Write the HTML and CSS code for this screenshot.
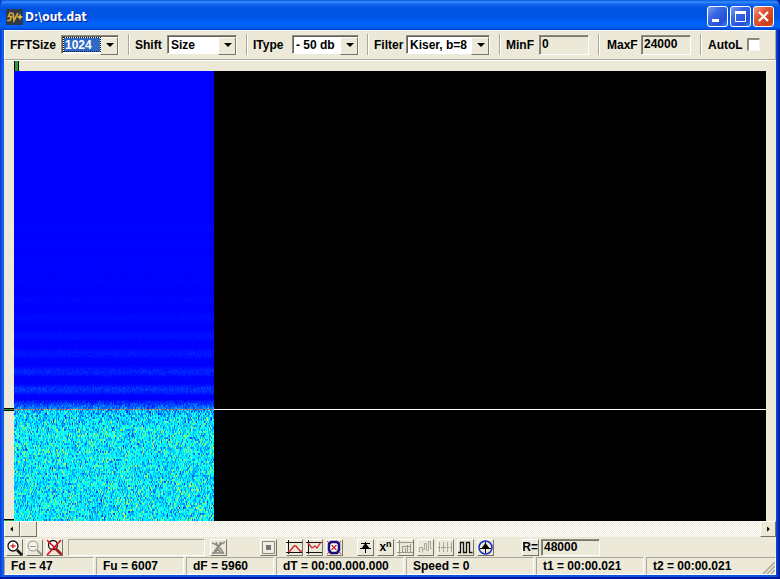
FILE: index.html
```html
<!DOCTYPE html>
<html lang="en">
<head>
<meta charset="utf-8">
<title>D:\out.dat</title>
<link rel="stylesheet" href="styles.css">
</head>
<body>
<div class="window">
  <header class="titlebar">
    <svg class="logo" viewBox="0 0 17 16" aria-hidden="true">
      <rect width="17" height="16" fill="#30384a"/>
      <path d="M6.500 4H4L2.500 7.500h3L4 11.500H1M7 4l1 7.500L12 4" fill="none" stroke="#d6a83e" stroke-width="1.700"/>
      <path d="M14 5.500v5M11.500 8h5" fill="none" stroke="#ead04a" stroke-width="1.400"/>
    </svg>
    <h1>D:\out.dat</h1>
    <div class="caption">
      <button class="cap" aria-label="Minimize"><svg viewBox="0 0 19 19"><path d="M4 12h7v3H4z" fill="#fff"/></svg></button>
      <button class="cap" aria-label="Maximize"><svg viewBox="0 0 19 19"><path d="M4.500 4v10.500h10V4" fill="none" stroke="#fff"/><path d="M4 4h11v3H4z" fill="#fff"/></svg></button>
      <button class="cap close" aria-label="Close"><svg viewBox="0 0 19 19"><path d="M5 5l9 9M14 5l-9 9" stroke="#fff" stroke-width="2.200"/></svg></button>
    </div>
  </header>
  <main class="client">
    <div class="toolbar">
      <div class="group g-size"><label for="size">FFTSize</label><span class="combo active"><select id="size"><option>1024</option></select><span class="focus"></span></span></div>
      <div class="group g-shift"><label for="shift">Shift</label><span class="combo"><select id="shift"><option>Size</option></select></span></div>
      <div class="group g-type"><label for="type">IType</label><span class="combo"><select id="type"><option>- 50 db</option></select></span></div>
      <div class="group g-filter"><label for="filter">Filter</label><span class="combo"><select id="filter"><option>Kiser, b=8</option></select></span></div>
      <div class="group g-min"><label for="minf">MinF</label><input class="text" id="minf" value="0"></div>
      <div class="group g-max"><label for="maxf">MaxF</label><input class="text" id="maxf" value="24000"></div>
      <div class="group g-auto"><label for="auto">AutoL</label><input class="check" type="checkbox" id="auto"></div>
    </div>
    <div class="ruler"></div>
    <div class="graph">
      <div class="scale"></div>
      <div class="plot"><canvas id="spectrum" width="200" height="450"></canvas></div>
      <div class="cursor"></div>
      <div class="tick cursor-tick"></div>
      <div class="tick end-tick"></div>
    </div>
    <div class="scrollbar">
      <button class="scroll" aria-label="Scroll left"><svg viewBox="0 0 16 16"><path d="M9 5v6L6 8z"/></svg></button>
      <div class="thumb"></div>
      <button class="scroll right" aria-label="Scroll right"><svg viewBox="0 0 16 16"><path d="M7 5v6l3-3z"/></svg></button>
    </div>
    <div class="tools">
      <div class="set">
        <button class="tool" aria-label="Zoom in"><svg viewBox="0 0 17 17"><circle cx="7" cy="7" r="5" fill="#fff" stroke="#111" stroke-width="1.300"/><path d="M11 11l5 5" stroke="#111" stroke-width="2.500"/><path d="M4.500 7h5M7 4.500v5" stroke="#e02030" stroke-width="1.300"/></svg></button>
        <button class="tool" aria-label="Zoom out"><svg viewBox="0 0 17 17"><circle cx="7" cy="7" r="5" fill="#f4f2e8" stroke="#96958b"/><path d="M11 11l5 5" stroke="#96958b" stroke-width="2.200"/><path d="M4 7.500h6" stroke="#96958b"/></svg></button>
        <button class="tool" aria-label="Reset zoom"><svg viewBox="0 0 17 17"><circle cx="7" cy="6" r="4.500" fill="#fff" stroke="#111" stroke-width="1.300"/><path d="M10 10l5 5" stroke="#111" stroke-width="2.500"/><path d="M1 1l15 15M15 1L1 16" stroke="#e01020" stroke-width="1.700"/></svg></button>
      </div>
      <div class="progress"></div>
      <button class="tool cancel" aria-label="Cancel"><svg viewBox="0 0 17 17"><path d="M2 4c4 1 9 5 12 11M15 3C10 5 6 9 3 15M6 3l2 5 3-5M5 14l3-4 3 4M2 14h12" fill="none" stroke="#8b8a80" stroke-width="1.500"/></svg></button>
      <button class="tool stop" aria-label="Stop"><svg viewBox="0 0 17 17"><path d="M2.500 2.500h12v12h-12z" fill="#f0eee2" stroke="#8b8a80"/><path d="M6 6h5v5H6z" fill="#77766e"/></svg></button>
      <div class="set views">
        <button class="tool" aria-label="Maximum curve"><svg viewBox="0 0 17 17"><path d="M2.500 1v14M0 3.500h16M0 13.500h16" stroke="#111" fill="none"/><path d="M2 12h2l4-5h2l4 5h2" fill="none" stroke="#d02834" stroke-width="1.300"/></svg></button>
        <button class="tool" aria-label="Minimum curve"><svg viewBox="0 0 17 17"><path d="M2.500 1v14M0 3.500h16M0 13.500h16" stroke="#111" fill="none"/><path d="M2 4l4 5 3-2 2 2 4-6" fill="none" stroke="#d02834" stroke-width="1.300"/></svg></button>
        <button class="tool" aria-label="Target"><svg viewBox="0 0 17 17"><path d="M1 2l14 13M15 2L1 15" stroke="#d02834"/><path d="M5 3h6l2 2v6l-2 3H5l-2-3V5z" fill="#fff" stroke="#17107c" stroke-width="2.500"/><path d="M5.500 6l5 5M10.500 6l-5 5" stroke="#d02834" stroke-width="1.300"/></svg></button>
      </div>
      <div class="set modes">
        <button class="tool" aria-label="Marker"><svg viewBox="0 0 17 17"><path d="M8 3h1v11H8zM4 4h9v1H4zM3 9h11v1H3z"/><path d="M8.500 4l4.500 6H4z"/></svg></button>
        <button class="tool power" aria-label="Power">x<sup>n</sup></button>
        <button class="tool" aria-label="Histogram"><svg viewBox="0 0 17 17"><path d="M2.500 1v14M0 3.500h16M0 13.500h16M5 7.500h9M5.500 7v6M8.500 9v4M10.500 6v7M13.500 5v8" fill="none" stroke="#99988c"/></svg></button>
        <button class="tool" aria-label="Envelope"><svg viewBox="0 0 17 17"><path d="M1 12.500h1.500V8.500h3v5M6 10.500h1.500v-6h2v7h2v-9h2v7h1.500" fill="none" stroke="#aaa99d"/></svg></button>
        <button class="tool" aria-label="Grid"><svg viewBox="0 0 17 17"><path d="M2.500 3v10M6.500 3v10M10.500 3v10M14.500 3v10" stroke="#aaa99d" fill="none"/><path d="M1 8.500h15" stroke="#99988c" stroke-dasharray="2 1"/></svg></button>
        <button class="tool" aria-label="Pulse"><svg viewBox="0 0 17 17"><path d="M1 13.500h2.500v-10h3v10h3v-10h3v10h3" stroke="#111" stroke-width="1.300" fill="none"/></svg></button>
        <button class="tool" aria-label="Circle marker"><svg viewBox="0 0 17 17"><circle cx="8.500" cy="8.500" r="6.500" fill="none" stroke="#1a2bc8" stroke-width="1.500"/><path d="M8 3h1v11H8zM3 9h11v1H3z"/><path d="M8.500 4l4.500 6H4z"/></svg></button>
      </div>
      <button class="tool rate-button">R=</button>
      <input class="text rate" aria-label="Rate" value="48000">
    </div>
    <footer class="status">
      <div class="cell">Fd = 47</div>
      <div class="cell">Fu = 6007</div>
      <div class="cell">dF = 5960</div>
      <div class="cell wide">dT = 00:00.000.000</div>
      <div class="cell wide">Speed = 0</div>
      <div class="cell mid">t1 = 00:00.021</div>
      <div class="cell last">t2 = 00:00.021<svg class="grip" viewBox="0 0 13 13" aria-hidden="true"><path d="M1 13L13 1M5 13l8-8M9 13l4-4" stroke="#aaa899" stroke-width="1.500"/></svg></div>
    </footer>
  </main>
</div>
<script src="spectrum.js"></script>
</body>
</html>
```

FILE: styles.css
```css
* { box-sizing: border-box; }

body {
  margin: 0;
  background: #0a3fd0;
  font: bold 12px/14px "Liberation Sans", Arial, sans-serif;
  color: #000;
}

button, input, select {
  margin: 0;
  padding: 0;
  border: 0;
  border-radius: 0;
  font: inherit;
  color: inherit;
}

svg { display: block; }

.window {
  display: flex;
  flex-direction: column;
  min-height: 100vh;
  padding: 0 4px 4px;
  background: linear-gradient(90deg, #0831d9 0, #166aee 3px, #0855dd 4px, #0855dd calc(100% - 4px), #0040d0 calc(100% - 3px), #00138c 100%);
  box-shadow: inset 0 -2px #0019a0;
}

.titlebar {
  display: flex;
  align-items: center;
  height: 30px;
  margin: 0 -4px;
  padding: 3px 6px 0;
  border-radius: 7px 7px 0 0;
  background: linear-gradient(#0058e6 0, #3a8df8 2px, #1468ee 4px, #0054e3 8px, #0055e5 17px, #0263fc 24px, #0261fa 27px, #0040c8 30px);
  color: #fff;
}

.logo { width: 17px; height: 16px; }

h1 {
  flex: 1;
  margin: 0 0 0 2px;
  font: bold 12px/16px "DejaVu Sans Condensed", "DejaVu Sans", sans-serif;
  text-shadow: 1px 1px #0a1883;
}

.caption { display: flex; gap: 2px; }

.cap {
  width: 21px;
  height: 21px;
  border: 1px solid #fff;
  border-radius: 3px;
  background: linear-gradient(135deg, #7ba0f2, #3a68e4 35%, #2450d8 75%, #3c7cf4);
}

.cap.close { background: linear-gradient(135deg, #f0a088, #e35a38 35%, #cc3c18 80%, #d85c30); }

.client {
  flex: 1;
  display: flex;
  flex-direction: column;
  background: #ece9d8;
}

.toolbar {
  display: flex;
  height: 30px;
  border: 1px solid #fff;
  border-right-color: #aca899;
  border-bottom-color: #aca899;
}

.group {
  display: flex;
  align-items: center;
  justify-content: space-between;
  margin: 3px 0 4px;
  padding: 0 9px 0 6px;
  border-right: 1px solid #aca899;
  box-shadow: 1px 0 #fff;
}

.g-size { width: 124px; padding-left: 5px; }
.g-shift { width: 118px; }
.g-type { width: 121px; padding-right: 8px; }
.g-filter { width: 132px; }
.g-min { width: 99px; }
.g-max { width: 102px; padding-left: 8px; }
.g-auto { flex: 1; padding-left: 7px; padding-right: 15px; border: 0; box-shadow: none; }

.combo { position: relative; height: 19px; }
.g-size .combo { width: 58px; }
.g-shift .combo { width: 70px; }
.g-type .combo { width: 67px; }
.g-filter .combo { width: 84px; }

select {
  display: block;
  width: 100%;
  height: 19px;
  padding-left: 3px;
  appearance: none;
  border: 1px solid #8c8a7c;
  border-right-color: #fff;
  border-bottom-color: #fff;
  background: #fff;
  box-shadow: inset 1px 1px #605f57;
}

.combo::before {
  content: "";
  position: absolute;
  top: 2px;
  right: 1px;
  width: 16px;
  height: 16px;
  border: 1px solid #fff;
  border-right-color: #77756a;
  border-bottom-color: #77756a;
  background: #ece9d8;
  pointer-events: none;
}

.combo::after {
  content: "";
  position: absolute;
  top: 8px;
  right: 5px;
  border: 4px solid transparent;
  border-top-color: #000;
  border-bottom: 0;
  pointer-events: none;
}

.active select {
  background: linear-gradient(#316ac5, #316ac5) 2px 2px / calc(100% - 20px) 14px no-repeat #fff;
  color: #fff;
}

.focus {
  position: absolute;
  top: 2px;
  right: 18px;
  bottom: 2px;
  left: 2px;
  border: 1px dotted #101830;
  pointer-events: none;
}

.text {
  width: 50px;
  height: 20px;
  padding: 0 0 1px 2px;
  border: 1px solid #8c8a7c;
  border-right-color: #fff;
  border-bottom-color: #fff;
  background: #ece9d8;
  box-shadow: inset 1px 1px #77756a;
}

.check {
  width: 13px;
  height: 13px;
  appearance: none;
  background: #fff;
  border: 2px solid #8c8a7c;
  border-right: 1px solid #f5f3ea;
  border-bottom: 1px solid #f5f3ea;
}

.ruler {
  height: 11px;
  padding-left: 10px;
  border-top: 1px solid #fff;
}

.ruler::before {
  content: "";
  display: block;
  width: 3px;
  height: 10px;
  border: 1px solid #000;
  border-width: 0 1px;
  background: #2c9c38;
}

.graph {
  position: relative;
  flex: 1;
  display: flex;
  padding-right: 10px;
}

.scale { width: 10px; }
.plot { flex: 1; background: #000; }
.plot canvas { display: block; }

.cursor {
  position: absolute;
  top: 338px;
  left: 210px;
  right: 10px;
  height: 1px;
  background: #fff;
}

.tick {
  position: absolute;
  left: 0;
  width: 10px;
  height: 3px;
  border: 1px solid #000;
  border-width: 1px 0;
  background: #2c9c38;
}

.cursor-tick { top: 337px; }
.end-tick { bottom: 0; height: 2px; border-bottom: 0; }

.scrollbar {
  display: flex;
  height: 16px;
  background: repeating-conic-gradient(#fff 0 25%, #ece9d8 0 50%) 0 0 / 2px 2px;
}

.scroll, .thumb, .tool {
  border: 1px solid #fff;
  border-right-color: #77756a;
  border-bottom-color: #77756a;
  background: #ece9d8;
}

.scroll { width: 16px; height: 16px; }
.thumb { width: 17px; }
.right { margin-left: auto; }

.tools {
  display: flex;
  align-items: center;
  height: 20px;
  padding-left: 2px;
}

.set { display: flex; gap: 3px; }
.tool { width: 17px; height: 17px; flex: none; }
.tool svg { width: 17px; height: 17px; margin: -1px; }

.progress {
  width: 137px;
  height: 17px;
  margin: 0 5px;
  border: 1px solid #aca899;
  border-right-color: #fff;
  border-bottom-color: #fff;
}

.stop { margin-left: 33px; }
.views { margin-left: 9px; }
.modes { margin-left: 14px; }

.power {
  display: flex;
  align-items: center;
  justify-content: center;
  line-height: 15px;
}

.power sup { padding-bottom: 5px; font-size: 9px; line-height: 9px; }

.rate-button {
  display: flex;
  justify-content: flex-end;
  margin-left: 28px;
  overflow: hidden;
}

.rate { width: 59px; height: 17px; margin-left: 2px; }

.status { display: flex; gap: 2px; height: 18px; }

.cell {
  width: 88px;
  height: 18px;
  padding: 1px 0 0 6px;
  border: 1px solid #aca899;
  border-right-color: #fff;
  border-bottom-color: #fff;
  white-space: nowrap;
}

.cell:first-child { width: 90px; }
.cell.wide { width: 128px; }
.cell.mid { width: 108px; }
.cell.last { flex: 1; display: flex; justify-content: space-between; align-items: flex-start; }
.grip { width: 13px; height: 13px; margin-top: 2px; }
```

FILE: spectrum.js
```js
const canvas = document.getElementById("spectrum");
const ctx = canvas.getContext("2d");
const { width, height } = canvas;
const image = ctx.createImageData(width, height);
const EDGE = 338;

let seed = 48000;
function random() {
  seed = (Math.imul(seed, 1664525) + 1013904223) >>> 0;
  return seed / 4294967296;
}

// Maps a level to blue, cyan, green-yellow.
function colour(v) {
  if (v < 0) return [0, 0, Math.max(120, 255 + v * 300)];
  if (v < 1) return [0, v * 255, 255];
  const t = Math.min(0.85, v - 1);
  return [t * 255, 255, 255 - t * 255];
}

for (let x = 0; x < width; x++) {
  let noise = 0;
  for (let y = 0; y < height; y++) {
    const fresh = random() + random() + random() - 1.5;
    noise = y % 2 ? noise * 0.8 + fresh * 0.4 : fresh;
    let v = 0;
    if (y >= EDGE) {
      const ramp = Math.min(1, (y - EDGE) / 18);
      v = 0.72 + ramp * 0.24 + noise * 0.66;
      // Levels close to saturation stay cyan; only the peaks turn yellow.
      if (v > 1) v = 1 + Math.max(0, v - 1.15) * 1.7;
    } else if (y > 328) {
      v = (y - 328) / 10 * 0.55 + noise * 0.4 * (y - 326) / 12;
      v = Math.max(0, v);
    } else if (y > 150) {
      // Side lobes fade with distance from the band edge.
      const wave = Math.max(0, Math.cos((y - 318) * Math.PI * 2 / 18) + 0.45);
      const gain = Math.exp((y - 320) / 42);
      v = wave * gain * Math.max(0, 0.13 + noise * 0.1);
    }
    let rgb = colour(v);
    if (y === EDGE) rgb = [150 + noise * 60, 125 + noise * 40, 120];
    const i = (y * width + x) * 4;
    image.data[i] = rgb[0];
    image.data[i + 1] = rgb[1];
    image.data[i + 2] = rgb[2];
    image.data[i + 3] = 255;
  }
}
ctx.putImageData(image, 0, 0);
```
